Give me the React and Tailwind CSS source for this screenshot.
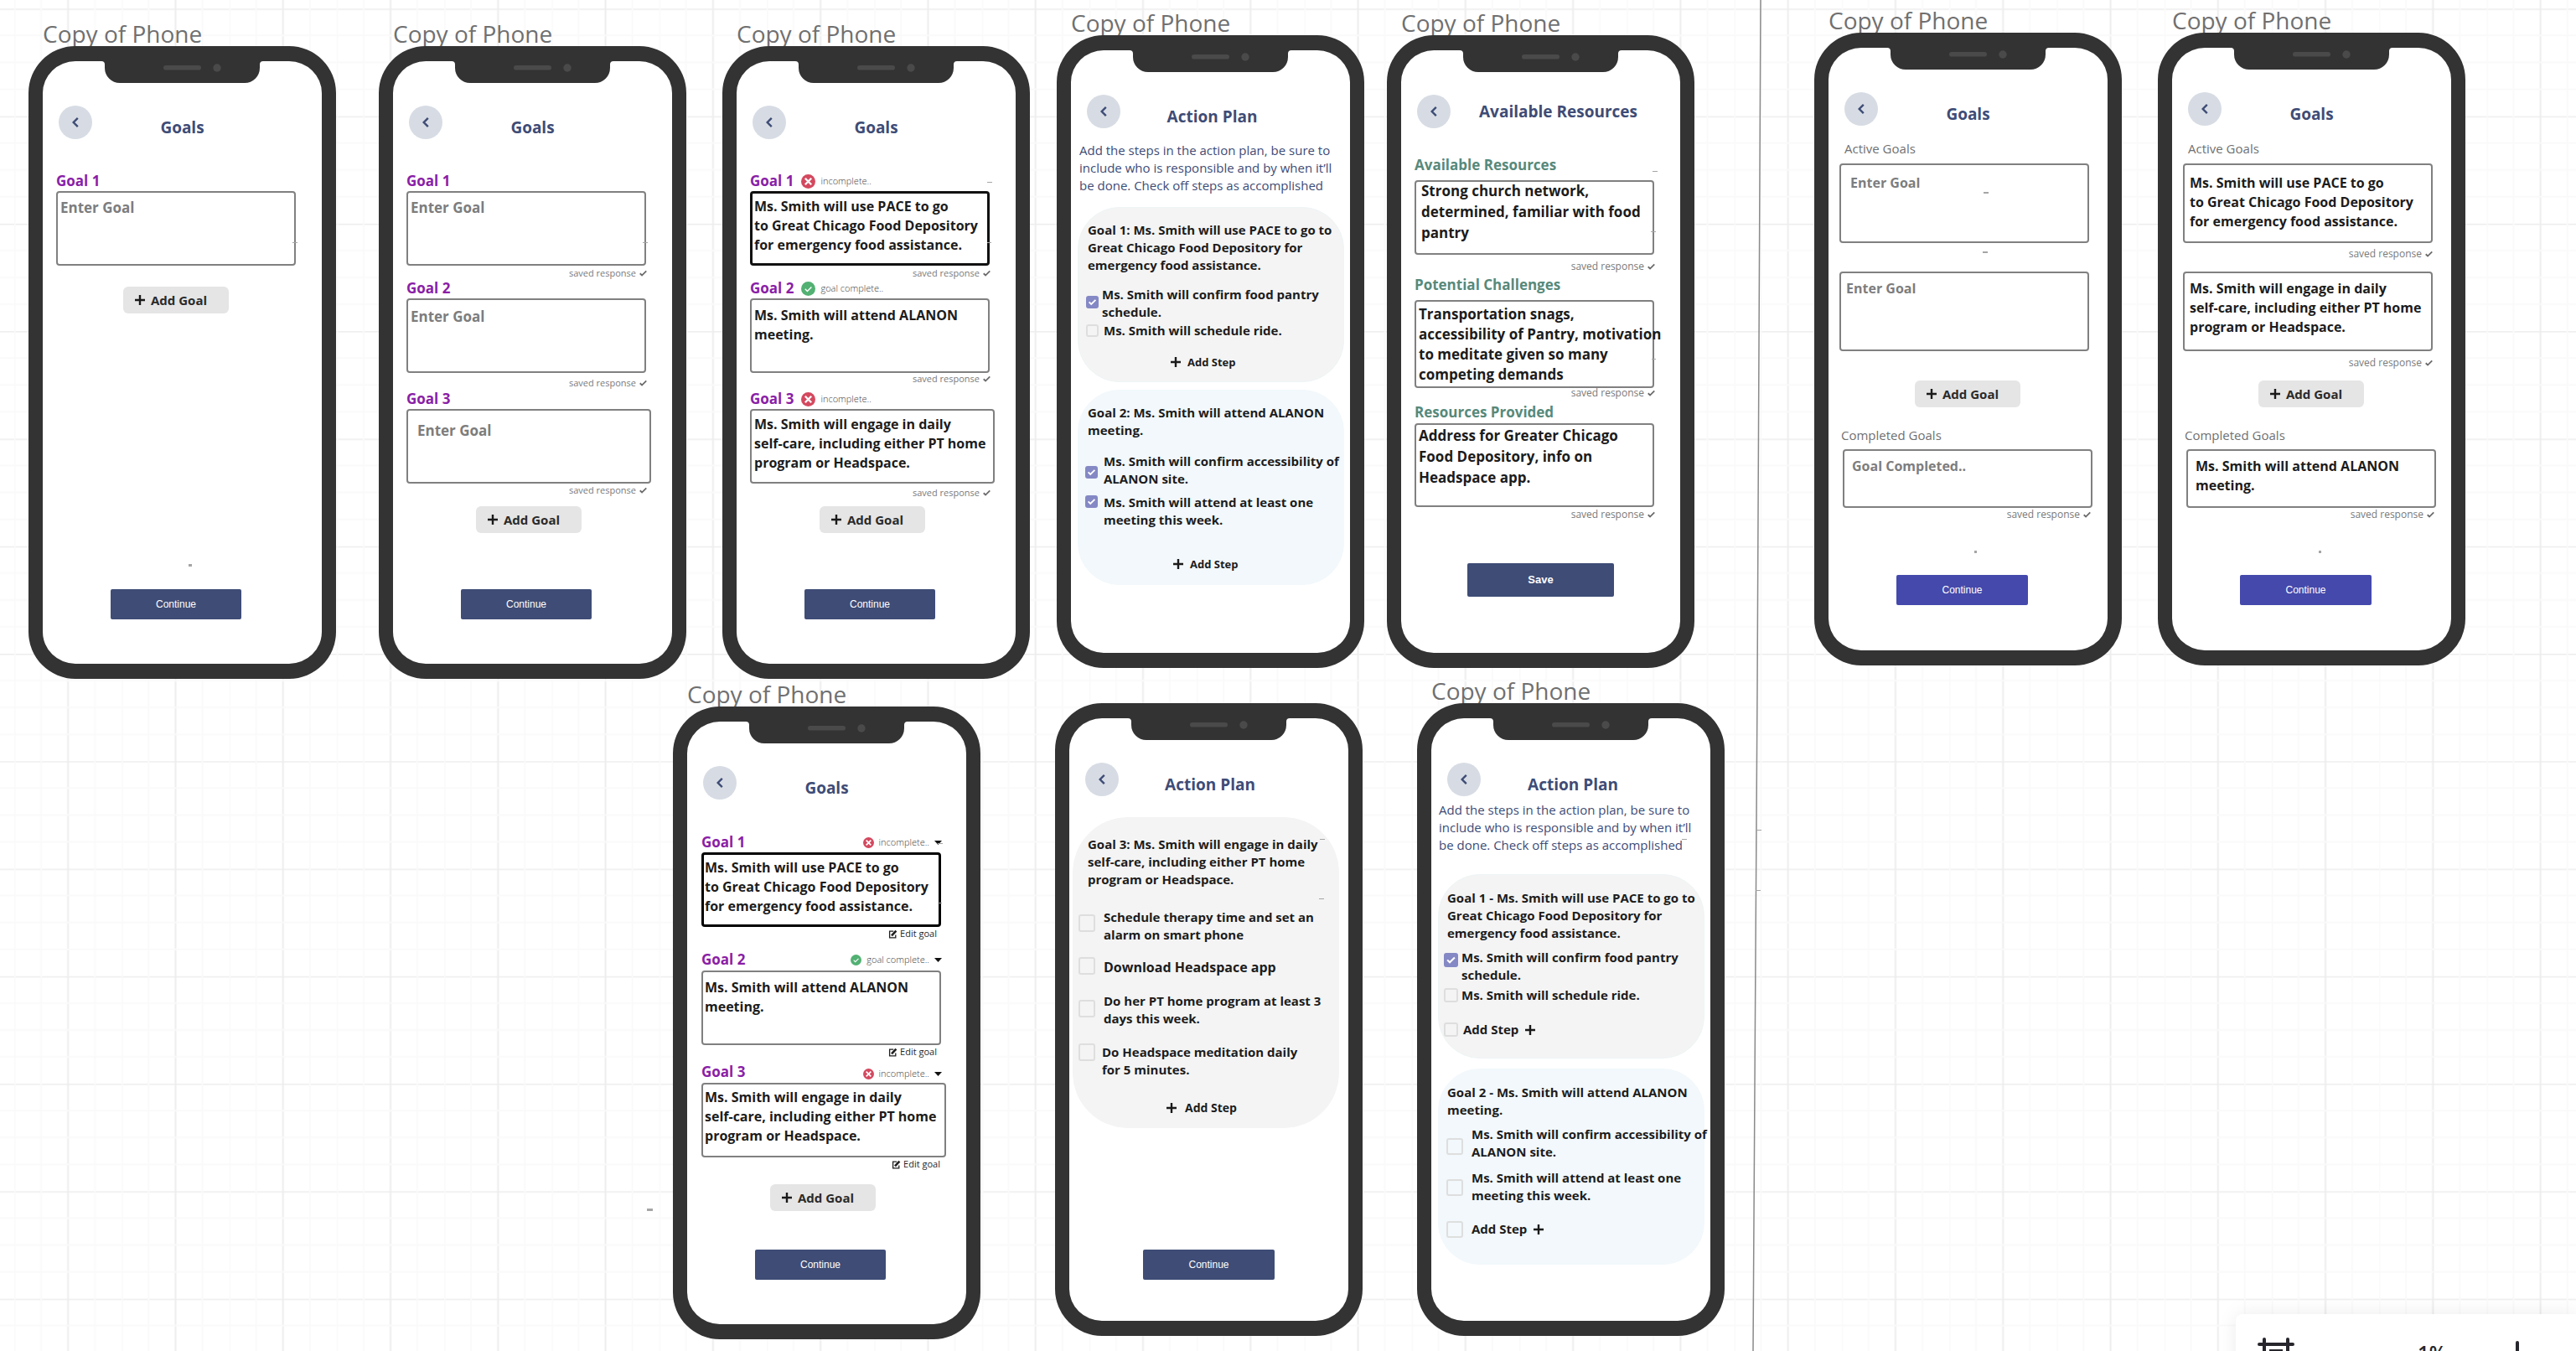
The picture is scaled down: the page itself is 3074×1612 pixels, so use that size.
import React, { useId } from 'react';

const SANS = "font-['Open_Sans',sans-serif]";

/* ---------- icons ---------- */

function Chevron() {
  return (
    <svg viewBox="0 0 8 12" className="w-2 h-3" fill="none" stroke="#3e4c76" strokeWidth="2.4">
      <path d="M6.8 0.9 1.7 6l5.1 5.1" />
    </svg>
  );
}

function Plus() {
  return (
    <svg viewBox="0 0 12 12" className="w-3 h-3 shrink-0" fill="none" stroke="#1a1a1a" strokeWidth="2.4">
      <path d="M6 0v12M0 6h12" />
    </svg>
  );
}

function SavedTick() {
  return (
    <svg viewBox="0 0 10 8" className="w-[9px] h-2 shrink-0" fill="none" stroke="#6b6b6b" strokeWidth="2">
      <path d="M0.8 4.3 3.4 6.8 9.2 1" />
    </svg>
  );
}

function StatusIcon({ done, small }) {
  const size = small ? 'w-[13px] h-[13px] shrink-0' : 'w-[17px] h-[17px] shrink-0';
  return (
    <svg viewBox="0 0 17 17" className={size} fill="none" stroke="#fff">
      <circle cx="8.5" cy="8.5" r="8.5" fill={done ? '#52b173' : '#d4495f'} stroke="none" />
      {done ? <path d="M4.8 8.8l2.6 2.6 5-5" strokeWidth="1.4" /> : <path d="M4.8 4.8l7.4 7.4M12.2 4.8l-7.4 7.4" strokeWidth="2.3" />}
    </svg>
  );
}

function EditIcon() {
  return (
    <svg viewBox="0 0 11 11" className="w-[11px] h-[11px] shrink-0" fill="none" stroke="#1f1f1f">
      <path d="M6.2 2.2H1.6v7.6h7.2V6.4" strokeWidth="1.3" />
      <path d="M4 7.4 9.4 1.6" strokeWidth="2.6" />
    </svg>
  );
}

/* ---------- phone shell ---------- */

function Phone({ place, name, title, titleClass = 'mt-[14px]', children, left = false }) {
  return (
    <section className={`absolute w-[367px] ${place}`}>
      {name && (
        <h2 className="absolute left-[17px] -top-[33px] text-[28px] leading-[36px] text-[#707070] whitespace-nowrap">{name}</h2>
      )}
      <div className="relative flex flex-col h-[755px] rounded-[56px] border-x-[17px] border-y-[18px] border-[#333] bg-white">
        <svg viewBox="0 0 193 26" className="w-[193px] h-[26px] mx-auto shrink-0 block">
          <path fill="#333" d="M0 -1H193V0a4 4 0 0 0-4 4v4a18 18 0 0 1-18 18H22A18 18 0 0 1 4 8V4a4 4 0 0 0-4-4z" />
          <rect x="74" y="5" width="45" height="5.6" rx="2.8" fill="#4a4a4a" />
          <circle cx="138" cy="8" r="4.7" fill="#4a4a4a" />
        </svg>
        <header className={`mt-[27px] h-10 px-[19px] shrink-0 ${left ? 'flex gap-[34px]' : 'grid grid-cols-[1fr_auto_1fr]'}`}>
          <button aria-label="Back" className="w-10 h-10 rounded-full bg-[#d7dce4] flex items-center justify-center">
            <Chevron />
          </button>
          <h1 className={`text-[19px] leading-6 font-bold text-[#3e4c76] whitespace-nowrap ${titleClass}`}>{title}</h1>
        </header>
        {children}
      </div>
    </section>
  );
}

/* ---------- goal list parts ---------- */

function Field({ label, status, statusMenu, statusClass = '', labelClass = '', labelText = 'text-[17px] leading-6 font-bold text-[#8a1ea6]', box, text, placeholder, value }) {
  const id = useId();
  const note = status === 'done' ? 'goal complete..' : 'incomplete..';
  return (
    <>
      {label && (
        <div className={`flex items-center ${labelClass}`}>
          <label htmlFor={id} className={`whitespace-nowrap ${labelText}`}>{label}</label>
          {status && !statusMenu && (
            <span className="ml-[9px] flex items-center gap-1.5 text-[11px] leading-4 font-light text-[#444]">
              <StatusIcon done={status === 'done'} />
              {note}
            </span>
          )}
          {statusMenu && (
            <button className={`ml-auto flex items-center gap-1.5 text-[11px] leading-4 font-light text-[#444] ${statusClass}`}>
              <StatusIcon small done={status === 'done'} />
              {note}
              <svg viewBox="0 0 9 5" className="w-[9px] h-[5px]"><path d="M0 0h9L4.500 5z" fill="#111" /></svg>
            </button>
          )}
        </div>
      )}
      <div className={`rounded-[4px] shrink-0 ${box}`}>
        <textarea
          id={id}
          aria-label={label ? undefined : 'Goal'}
          defaultValue={value}
          placeholder={placeholder}
          className={`block h-full w-full resize-none overflow-hidden whitespace-pre bg-transparent outline-none font-bold text-[#1c1c1c] placeholder:text-[#7d7d7d] placeholder:opacity-100 ${text}`}
        />
      </div>
    </>
  );
}

function Saved({ className = '', size = 'text-[12px]' }) {
  return (
    <p className={`flex items-center justify-end gap-1 leading-3 text-[#7a7a7a] shrink-0 ${size} ${className}`}>
      saved response <SavedTick />
    </p>
  );
}

function EditGoal({ className }) {
  return (
    <button className={`ml-auto flex items-center gap-[3px] text-[11px] leading-3 text-[#1f1f1f] shrink-0 ${className}`}>
      <EditIcon /> Edit goal
    </button>
  );
}

function AddGoal({ className }) {
  return (
    <button className={`w-[126px] h-8 shrink-0 rounded-md bg-[#e5e5e5] flex items-center gap-[7px] pl-[14px] text-[15px] font-bold text-[#2a2a2a] ${className}`}>
      <Plus /> Add Goal
    </button>
  );
}

function Action({ className, children }) {
  return (
    <button className={`shrink-0 rounded-[2px] text-white font-['Liberation_Sans',Arial,sans-serif] ${className}`}>{children}</button>
  );
}

const NAVY = 'ml-[81px] w-[156px] h-9 text-[12px] bg-[#3e4c76]';
const INDIGO = 'ml-[81px] w-[157px] h-9 text-[12px] bg-[#4449ab]';
const GREY_BOX = 'border-2 border-[#808080]';
const G1 = 'Ms. Smith will use PACE to go\nto Great Chicago Food Depository\nfor emergency food assistance.';
const G2 = 'Ms. Smith will attend ALANON\nmeeting.';
const G3 = 'Ms. Smith will engage in daily\nself-care, including either PT home\nprogram or Headspace.';

/* ---------- action plan parts ---------- */

function Card({ className, title, titleClass, children }) {
  return (
    <div className={`w-[318px] shrink-0 flex flex-col border ${className}`}>
      <h3 className={`text-[15px] leading-[21px] font-bold text-[#1c1c1c] whitespace-pre ${titleClass}`}>{title}</h3>
      {children}
    </div>
  );
}

function Step({ className = '', box, boxClass = '', text = 'text-[15px] leading-[21px]', checked, name, children }) {
  return (
    <label className={`flex items-start font-bold text-[#1c1c1c] whitespace-pre ${text} ${className}`}>
      <span className={`grid shrink-0 ${box} ${boxClass}`}>
        <input
          type="checkbox"
          aria-label={name}
          defaultChecked={checked}
          className="col-start-1 row-start-1 appearance-none w-full h-full rounded-[3px] border-2 border-[#dedede] checked:border-[#8488c4] checked:bg-[#8488c4]"
        />
        {checked && (
          <svg viewBox="0 0 15 15" className="col-start-1 row-start-1 w-full h-full pointer-events-none" fill="none" stroke="#fff" strokeWidth="1.8">
            <path d="M3.600 7.400 6.200 10 11.400 4.800" />
          </svg>
        )}
      </span>
      {children}
    </label>
  );
}

function AddStep({ className }) {
  return (
    <button className={`flex items-center leading-5 font-bold text-[#1c1c1c] ${className}`}>
      <Plus /> Add Step
    </button>
  );
}

function Intro({ className }) {
  return (
    <p className={`text-[15px] leading-[21px] text-[#3e4c76] whitespace-pre ${className}`}>
      {'Add the steps in the action plan, be sure to\ninclude who is responsible and by when it’ll\nbe done. Check off steps as accomplished'}
    </p>
  );
}

const GREY_CARD = 'rounded-[50px] bg-[#f4f4f4] border-[#eef4f5]';
const BLUE_CARD = 'rounded-[50px] bg-[#f2f8fb] border-[#f2f8fb]';

/* ---------- stray pen marks on the board ---------- */

const MARKS = [
  [349, 289, 6, 1], [225, 673, 4, 3], [767, 289, 6, 1], [1178, 217, 6, 1], [1178, 289, 5, 1],
  [1972, 204, 6, 1], [1970, 276, 6, 1], [1971, 428, 5, 1], [2367, 229, 6, 2], [2366, 300, 6, 2],
  [2356, 657, 3, 3], [2767, 657, 3, 3], [772, 1442, 7, 3], [1119, 1006, 6, 1], [1119, 1077, 5, 1],
  [1575, 1001, 6, 1], [1574, 1072, 6, 1], [2007, 1001, 6, 1], [2096, 990, 6, 1], [2095, 1062, 6, 1],
];

function Board() {
  return (
    <svg className="absolute inset-0 w-full h-full" aria-hidden="true">
      <defs>
        <pattern id="grid" x="17" y="10.3" width="128.280" height="128.280" patternUnits="userSpaceOnUse">
          <path d="M64.2 0V128.280M0 0.400H128.280" stroke="#ededed" strokeWidth="2" />
          <path d="M0.600 0V128.280M32.100 0V128.280M96.200 0V128.280M0 32.100H128.280M0 64.200H128.280M0 96.200H128.280" stroke="#fafafa" strokeWidth="2" />
        </pattern>
      </defs>
      <rect width="100%" height="100%" fill="url(#grid)" />
      <path d="M2101 0 2097 820 2092 1612" fill="none" stroke="#8a8a8a" strokeWidth="1.500" />
    </svg>
  );
}

function Marks() {
  return (
    <svg className="absolute inset-0 w-full h-full pointer-events-none" aria-hidden="true">
      {MARKS.map(([x, y, w, h]) => (
        <rect key={`${x}-${y}`} x={x} y={y} width={w} height={h} fill="#a5a5a5" />
      ))}
    </svg>
  );
}

function Toolbar() {
  return (
    <div className="absolute left-[2668px] right-0 top-[1568px] h-20 rounded-tl-lg bg-white shadow-[0_0_24px_rgba(5,0,56,0.08)] flex items-start pl-[26px]">
      <button aria-label="Frames" className="mt-7">
        <svg viewBox="0 0 44 44" className="w-11 h-11" fill="none" stroke="#26262c" strokeWidth="4" strokeLinecap="round">
          <path d="M8 2v40M36 2v40M2 8h40M2 36h40" />
          <rect x="16" y="16" width="12" height="12" />
        </svg>
      </button>
      <span className="ml-[147px] mt-[31px] w-[34px] text-[24px] leading-[30px] font-semibold text-[#26262c]">1%</span>
      <button aria-label="Zoom in" className="ml-[67px] mt-[30px]">
        <svg viewBox="0 0 36 36" className="w-9 h-9" fill="none" stroke="#26262c" strokeWidth="4" strokeLinecap="round">
          <path d="M18 4v28M4 18h28" />
        </svg>
      </button>
    </div>
  );
}

const PLAIN_LABEL = 'text-[15px] leading-5 text-[#707070]';
const GREEN_LABEL = 'text-[17px] leading-6 font-bold text-[#57897a]';

export default function App() {
  return (
    <main className={`relative w-full h-screen overflow-hidden bg-white ${SANS}`}>
      <Board />

      <Phone place="left-[34px] top-[55px]" name="Copy of Phone" title="Goals">
        <div className="flex flex-col pl-4 mt-[38px]">
          <Field label="Goal 1" box={`w-[286px] h-[89px] ${GREY_BOX}`} text="pl-[3px] pt-1.5 text-[17px] leading-6" placeholder="Enter Goal" />
        </div>
        <AddGoal className="ml-24 mt-[25px]" />
        <Action className={`mt-[329px] ${NAVY}`}>Continue</Action>
      </Phone>

      <Phone place="left-[452px] top-[55px]" name="Copy of Phone" title="Goals">
        <div className="flex flex-col pl-4 mt-[38px] w-[303px]">
          <Field label="Goal 1" box={`w-[286px] h-[89px] ${GREY_BOX}`} text="pl-[3px] pt-1.5 text-[17px] leading-6" placeholder="Enter Goal" />
          <Saved size="text-[11px]" className="mt-[3px]" />
          <Field label="Goal 2" box={`w-[286px] h-[89px] ${GREY_BOX}`} text="pl-[3px] pt-2 text-[17px] leading-6" placeholder="Enter Goal" />
          <Saved size="text-[11px]" className="mt-1.5" />
          <Field label="Goal 3" labelClass="mt-px" box={`w-[292px] h-[89px] ${GREY_BOX}`} text="pl-[11px] pt-3 text-[17px] leading-6" placeholder="Enter Goal" />
          <Saved size="text-[11px]" className="mt-0.5" />
        </div>
        <AddGoal className="ml-[99px] mt-[13px]" />
        <Action className={`mt-[67px] ${NAVY}`}>Continue</Action>
      </Phone>

      <Phone place="left-[862px] top-[55px]" name="Copy of Phone" title="Goals">
        <div className="flex flex-col pl-4 mt-[38px] w-[303px]">
          <Field label="Goal 1" status="open" box="w-[286px] h-[89px] border-[3px] border-[#111]" text="pl-0.5 pt-1 text-[16px] leading-[23px]" value={G1} />
          <Saved size="text-[11px]" className="mt-[3px]" />
          <Field label="Goal 2" status="done" box={`w-[286px] h-[89px] ${GREY_BOX}`} text="pl-[3px] pt-[7px] text-[16px] leading-[23px]" value={G2} />
          <Saved size="text-[11px]" className="mt-px" />
          <Field label="Goal 3" status="open" labelClass="mt-1.5" box={`w-[292px] h-[89px] ${GREY_BOX}`} text="pl-[3px] pt-[5px] text-[16px] leading-[23px]" value={G3} />
          <Saved size="text-[11px]" className="mt-[5px]" />
        </div>
        <AddGoal className="ml-[99px] mt-[10px]" />
        <Action className={`mt-[67px] ${NAVY}`}>Continue</Action>
      </Phone>

      <Phone place="left-[1261px] top-[42px]" name="Copy of Phone" title="Action Plan" titleClass="mt-[14px] ml-1">
        <Intro className="mt-4 ml-[10px]" />
        <Card className={`mt-[15px] ml-2 h-[209px] ${GREY_CARD}`} title={'Goal 1: Ms. Smith will use PACE to go to\nGreat Chicago Food Depository for\nemergency food assistance.'} titleClass="mt-4 ml-[11px]">
          <Step className="mt-[14px] ml-[9px] gap-1" box="w-[15px] h-[15px]" boxClass="mt-3" checked>{'Ms. Smith will confirm food pantry\nschedule.'}</Step>
          <Step className="mt-px ml-[9px] gap-1.5" box="w-[15px] h-[15px]" boxClass="mt-[3px]">Ms. Smith will schedule ride.</Step>
          <AddStep className="mt-[17px] ml-[110px] gap-2 text-[13px]" />
        </Card>
        <Card className={`mt-[9px] ml-2 h-[233px] ${BLUE_CARD}`} title={'Goal 2: Ms. Smith will attend ALANON\nmeeting.'} titleClass="mt-4 ml-[11px]">
          <Step className="mt-4 ml-2 gap-[7px]" box="w-[15px] h-[15px]" boxClass="mt-4" checked>{'Ms. Smith will confirm accessibility of\nALANON site.'}</Step>
          <Step className="mt-[7px] ml-2 gap-[7px]" box="w-[15px] h-[15px]" boxClass="mt-0.5" checked>{'Ms. Smith will attend at least one\nmeeting this week.'}</Step>
          <AddStep className="mt-8 ml-[113px] gap-2 text-[13px]" />
        </Card>
      </Phone>

      <Phone place="left-[1655px] top-[42px]" name="Copy of Phone" title="Available Resources" titleClass="mt-2" left>
        <div className="flex flex-col pl-4 mt-8 w-[303px]">
          <Field label="Available Resources" labelText={GREEN_LABEL} labelClass="mb-1.5" box={`w-[286px] h-[89px] ${GREY_BOX}`} text="pl-1.5 -mt-[2px] text-[17px] leading-[25px]" value={'Strong church network,\ndetermined, familiar with food\npantry'} />
          <Saved className="mt-2" />
          <Field label="Potential Challenges" labelText={GREEN_LABEL} labelClass="mt-1 mb-1.5" box={`w-[286px] h-[105px] ${GREY_BOX}`} text="pl-[3px] pt-[3px] min-w-[310px] text-[17px] leading-6" value={'Transportation snags,\naccessibility of Pantry, motivation\nto meditate given so many\ncompeting demands'} />
          <Saved />
          <Field label="Resources Provided" labelText={GREEN_LABEL} labelClass="mt-[5px] mb-px" box={`w-[286px] h-[100px] ${GREY_BOX}`} text="pl-[3px] text-[17px] leading-[25px]" value={'Address for Greater Chicago\nFood Depository, info on\nHeadspace app.'} />
          <Saved className="mt-[3px]" />
        </div>
        <Action className="mt-[52px] ml-[79px] w-[175px] h-10 text-[13px] font-bold bg-[#3e4c76]">Save</Action>
      </Phone>

      <Phone place="left-[2165px] top-[39px]" name="Copy of Phone" title="Goals">
        <div className="flex flex-col pl-[13px] mt-[17px] w-[313px]">
          <Field label="Active Goals" labelText={PLAIN_LABEL} labelClass="ml-1.5 mb-2" box={`w-[298px] h-[95px] ${GREY_BOX}`} text="pl-[11px] pt-[9px] text-[16px] leading-6" placeholder="Enter Goal" />
          <Field box={`mt-[34px] w-[298px] h-[95px] ${GREY_BOX}`} text="pl-1.5 pt-1.5 text-[16px] leading-6" placeholder="Enter Goal" />
        </div>
        <AddGoal className="ml-[103px] mt-[35px]" />
        <div className="flex flex-col pl-[17px] mt-[23px] w-[313px]">
          <Field label="Completed Goals" labelText={PLAIN_LABEL} labelClass="-ml-0.5 mb-[7px]" box={`w-[298px] h-[70px] ${GREY_BOX}`} text="pl-[9px] pt-1.5 text-[16px] leading-6" placeholder="Goal Completed.." />
          <Saved className="mt-0.5" />
        </div>
        <Action className={`mt-[66px] ${INDIGO}`}>Continue</Action>
      </Phone>

      <Phone place="left-[2575px] top-[39px]" name="Copy of Phone" title="Goals">
        <div className="flex flex-col pl-[13px] mt-[17px] w-[311px]">
          <Field label="Active Goals" labelText={PLAIN_LABEL} labelClass="ml-1.5 mb-2" box={`w-[298px] h-[95px] ${GREY_BOX}`} text="pl-1.5 pt-[10px] text-[16px] leading-[23px]" value={G1} />
          <Saved className="mt-[7px]" />
          <Field box={`mt-[15px] w-[298px] h-[95px] ${GREY_BOX}`} text="pl-1.5 pt-[7px] text-[16px] leading-[23px]" value={G3} />
          <Saved className="mt-2" />
        </div>
        <AddGoal className="ml-[103px] mt-[15px]" />
        <div className="flex flex-col pl-[17px] mt-[23px] w-[313px]">
          <Field label="Completed Goals" labelText={PLAIN_LABEL} labelClass="-ml-0.5 mb-[7px]" box={`w-[298px] h-[70px] ${GREY_BOX}`} text="pl-[9px] pt-[7px] text-[16px] leading-[23px]" value={G2} />
          <Saved className="mt-0.5" />
        </div>
        <Action className={`mt-[66px] ${INDIGO}`}>Continue</Action>
      </Phone>

      <Phone place="left-[803px] top-[843px]" name="Copy of Phone" title="Goals">
        <div className="flex flex-col pl-[17px] mt-[39px] w-[304px]">
          <Field label="Goal 1" status="open" statusMenu box="w-[286px] h-[89px] border-[3px] border-black" text="pl-px pt-1 text-[16px] leading-[23px]" value={G1} />
          <EditGoal className="mt-0.5 mr-1.5" />
          <Field label="Goal 2" status="done" statusMenu labelClass="mt-[13px]" box={`mt-px w-[286px] h-[89px] ${GREY_BOX}`} text="pl-0.5 pt-[7px] text-[16px] leading-[23px]" value={G2} />
          <EditGoal className="mt-0.5 mr-1.5" />
          <Field label="Goal 3" status="open" statusMenu labelClass="mt-1.5" statusClass="mt-1" box={`mt-px w-[292px] h-[89px] ${GREY_BOX}`} text="pl-0.5 pt-1 text-[16px] leading-[23px]" value={G3} />
          <EditGoal className="mt-0.5 mr-0.5" />
        </div>
        <AddGoal className="ml-[99px] mt-[18px]" />
        <Action className={`mt-[46px] ${NAVY}`}>Continue</Action>
      </Phone>

      <Phone place="left-[1259px] top-[839px]" title="Action Plan" titleClass="mt-[14px] ml-[3px]">
        <Card className="mt-[25px] ml-1 h-[371px] rounded-[66px] bg-[#f4f4f4] border-[#f4f4f4]" title={'Goal 3: Ms. Smith will engage in daily\nself-care, including either PT home\nprogram or Headspace.'} titleClass="mt-[21px] ml-[17px]">
          <Step className="mt-6 ml-1.5 gap-[10px]" box="w-5 h-[21px]" boxClass="mt-[7px]">{'Schedule therapy time and set an\nalarm on smart phone'}</Step>
          <Step className="mt-4 ml-1.5 gap-[10px]" box="w-5 h-[21px]" text="text-[16px] leading-6">Download Headspace app</Step>
          <Step className="mt-[18px] ml-1.5 gap-[10px]" box="w-5 h-[21px]" boxClass="mt-[9px]">{'Do her PT home program at least 3\ndays this week.'}</Step>
          <Step className="mt-[19px] ml-1.5 gap-2" box="w-5 h-[21px]">{'Do Headspace meditation daily\nfor 5 minutes.'}</Step>
          <AddStep className="mt-[25px] ml-[111px] gap-[10px] text-[14px]" />
        </Card>
        <Action className="mt-[145px] ml-[88px] w-[157px] h-9 text-[12px] bg-[#3e4c76]">Continue</Action>
      </Phone>

      <Phone place="left-[1691px] top-[839px]" name="Copy of Phone" title="Action Plan" titleClass="mt-[14px] ml-[5px]">
        <Intro className="mt-1.5 ml-[9px]" />
        <Card className={`mt-6 ml-2 h-[220px] ${GREY_CARD}`} title={'Goal 1 - Ms. Smith will use PACE to go to\nGreat Chicago Food Depository for\nemergency food assistance.'} titleClass="mt-[17px] ml-[10px]">
          <Step className="mt-2 ml-1.5 gap-1" box="w-[17px] h-[17px]" boxClass="mt-[5px]" checked>{'Ms. Smith will confirm food pantry\nschedule.'}</Step>
          <Step className="mt-[3px] ml-1.5 gap-1" box="w-[17px] h-[17px]" boxClass="mt-0.5">Ms. Smith will schedule ride.</Step>
          <div className="mt-5 ml-1.5 flex items-center gap-1.5">
            <Step name="New step for goal 1" box="w-[17px] h-[17px]" />
            <button className="flex items-center gap-2 text-[15px] leading-[21px] font-bold text-[#1c1c1c]">Add Step <Plus /></button>
          </div>
        </Card>
        <Card className={`mt-3 ml-2 h-[234px] ${BLUE_CARD}`} title={'Goal 2 - Ms. Smith will attend ALANON\nmeeting.'} titleClass="mt-[17px] ml-[10px]">
          <Step className="mt-2 ml-[9px] gap-[10px]" box="w-5 h-5" boxClass="mt-[15px]">{'Ms. Smith will confirm accessibility of\nALANON site.'}</Step>
          <Step className="mt-[10px] ml-[9px] gap-[10px]" box="w-5 h-5" boxClass="mt-3">{'Ms. Smith will attend at least one\nmeeting this week.'}</Step>
          <div className="mt-[19px] ml-[9px] flex items-center gap-[10px]">
            <Step name="New step for goal 2" box="w-5 h-5" />
            <button className="flex items-center gap-2 text-[15px] leading-[21px] font-bold text-[#1c1c1c]">Add Step <Plus /></button>
          </div>
        </Card>
      </Phone>

      <Marks />
      <Toolbar />
    </main>
  );
}
